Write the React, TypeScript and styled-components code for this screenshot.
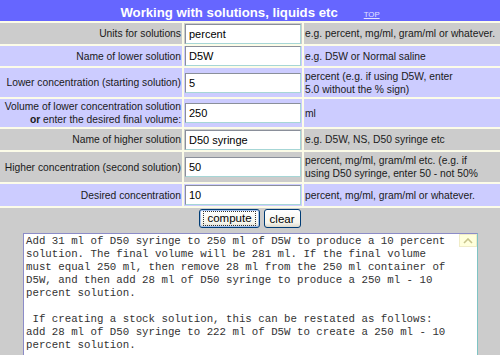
import * as React from 'react';
import styled, { createGlobalStyle } from 'styled-components';

const Global = createGlobalStyle`
  html, body {
    margin: 0;
    padding: 0;
    overflow: hidden;
    background: #fcfce8;
  }
  body {
    font-family: "Liberation Sans", Arial, sans-serif;
  }
`;

const Form = styled.div`
  width: 500px;
  display: grid;
  grid-template-columns: 182px 118px 1fr;
  grid-template-rows: 21px 21px 20px 29px 28px 21px 30px 22px 200px;
  gap: 2px;
  background: #fcfce8;
`;

const Header = styled.div`
  grid-column: 1 / -1;
  background: #6666ff;
  color: #fff;
  text-align: center;
  line-height: 24px;
  overflow: hidden;
  white-space: nowrap;
`;

const Title = styled.span`
  font-size: 13.2px;
  font-weight: bold;
`;

const TopLink = styled.a`
  margin-left: 26px;
  font-size: 7.8px;
  color: #e4e4ff;
  text-decoration: underline;
`;

const Cell = styled.div<{ $tone: 'gray' | 'blue' }>`
  background: ${(p) => (p.$tone === 'gray' ? '#cccccc' : '#ccccff')};
  display: flex;
  align-items: center;
  padding: 0 1px;
  font-size: 10.3px;
  line-height: 13px;
  color: #1a1a1a;
  white-space: nowrap;
`;

const Label = styled(Cell)`
  justify-content: flex-end;
  text-align: right;
`;

const Hint = styled(Cell)`
  padding-left: 1px;
`;

const Field = styled.input`
  width: 116px;
  height: 20px;
  box-sizing: border-box;
  border: 1px solid;
  border-color: #8a8f9a #a6d6d6 #a6d6d6 #8a8f9a;
  padding: 0 3px;
  font-family: "Liberation Sans", Arial, sans-serif;
  font-size: 11px;
  color: #000;
  background: #fff;
  outline: none;
`;

const Bottom = styled.div`
  grid-column: 1 / -1;
  background: #cccccc;
  display: flex;
  flex-direction: column;
  align-items: center;
`;

const ButtonRow = styled.div`
  display: flex;
  gap: 4px;
  margin-top: 1px;
`;

const Button = styled.button<{ $pad: number; $focused?: boolean }>`
  height: 19px;
  padding: 0 ${(p) => p.$pad}px;
  border: 1px solid #003c74;
  border-radius: 3px;
  background: linear-gradient(#ffffff, #f6f6ee 75%, #dcd8cc);
  box-shadow: ${(p) => (p.$focused ? 'inset 0 0 0 1px #a8c4f0' : 'none')};
  font-family: "Liberation Sans", Arial, sans-serif;
  font-size: 11.5px;
  color: #000;
  display: flex;
  align-items: center;
`;

const FocusRing = styled.span`
  border: 1px dotted #333;
  padding: 0 3px;
  line-height: 13px;
`;

const TextBox = styled.div`
  position: relative;
  align-self: flex-start;
  margin: 5px 0 0 23px;
  width: 455px;
`;

const Output = styled.textarea`
  display: block;
  width: 100%;
  height: 160px;
  box-sizing: border-box;
  border: 1px solid;
  border-color: #8c8cc8 #7fc4c4 #7fc4c4 #8c8cc8;
  padding: 1px 20px 0 2px;
  font-family: "Liberation Mono", "Courier New", monospace;
  font-size: 10.75px;
  line-height: 13px;
  color: #333;
  background: #fff;
  resize: none;
  overflow: hidden;
  white-space: pre;
  outline: none;
`;

const ScrollUp = styled.div`
  position: absolute;
  top: 1px;
  right: 1px;
  width: 18px;
  height: 13px;
  box-sizing: border-box;
  background: #ffffdc;
  border: 1px solid #f0ecc8;
  display: flex;
  align-items: center;
  justify-content: center;
`;

type Row = {
  label: React.ReactNode;
  value: string;
  hint: React.ReactNode;
  tone: 'gray' | 'blue';
};

const rows: Row[] = [
  { label: 'Units for solutions', value: 'percent', hint: 'e.g. percent, mg/ml, gram/ml or whatever.', tone: 'gray' },
  { label: 'Name of lower solution', value: 'D5W', hint: 'e.g. D5W or Normal saline', tone: 'blue' },
  {
    label: 'Lower concentration (starting solution)',
    value: '5',
    hint: (
      <span>
        percent (e.g. if using D5W, enter
        <br />
        5.0 without the % sign)
      </span>
    ),
    tone: 'blue',
  },
  {
    label: (
      <span>
        Volume of lower concentration solution
        <br />
        <b>or</b> enter the desired final volume:
      </span>
    ),
    value: '250',
    hint: 'ml',
    tone: 'blue',
  },
  { label: 'Name of higher solution', value: 'D50 syringe', hint: 'e.g. D5W, NS, D50 syringe etc', tone: 'gray' },
  {
    label: 'Higher concentration (second solution)',
    value: '50',
    hint: (
      <span>
        percent, mg/ml, gram/ml etc. (e.g. if
        <br />
        using D50 syringe, enter 50 - not 50%
      </span>
    ),
    tone: 'gray',
  },
  { label: 'Desired concentration', value: '10', hint: 'percent, mg/ml, gram/ml or whatever.', tone: 'blue' },
];

const result = [
  'Add 31 ml of D50 syringe to 250 ml of D5W to produce a 10 percent',
  'solution. The final volume will be 281 ml. If the final volume',
  'must equal 250 ml, then remove 28 ml from the 250 ml container of',
  'D5W, and then add 28 ml of D50 syringe to produce a 250 ml - 10',
  'percent solution.',
  '',
  ' If creating a stock solution, this can be restated as follows:',
  'add 28 ml of D50 syringe to 222 ml of D5W to create a 250 ml - 10',
  'percent solution.',
].join('\n');

export default function App() {
  return (
    <>
      <Global />
      <Form>
        <Header>
          <Title>Working with solutions, liquids etc</Title>
          <TopLink href="#top">TOP</TopLink>
        </Header>
        {rows.map((r, i) => (
          <React.Fragment key={i}>
            <Label $tone={r.tone}>{r.label}</Label>
            <Cell $tone={r.tone}>
              <Field defaultValue={r.value} />
            </Cell>
            <Hint $tone={r.tone}>{r.hint}</Hint>
          </React.Fragment>
        ))}
        <Bottom>
          <ButtonRow>
            <Button $pad={3} $focused>
              <FocusRing>compute</FocusRing>
            </Button>
            <Button $pad={5}>clear</Button>
          </ButtonRow>
          <TextBox>
            <Output readOnly defaultValue={result} />
            <ScrollUp>
              <svg width="10" height="6" viewBox="0 0 10 6">
                <path d="M1 5 L5 1 L9 5" fill="none" stroke="#c8c48c" strokeWidth="1.6" />
              </svg>
            </ScrollUp>
          </TextBox>
        </Bottom>
      </Form>
    </>
  );
}
